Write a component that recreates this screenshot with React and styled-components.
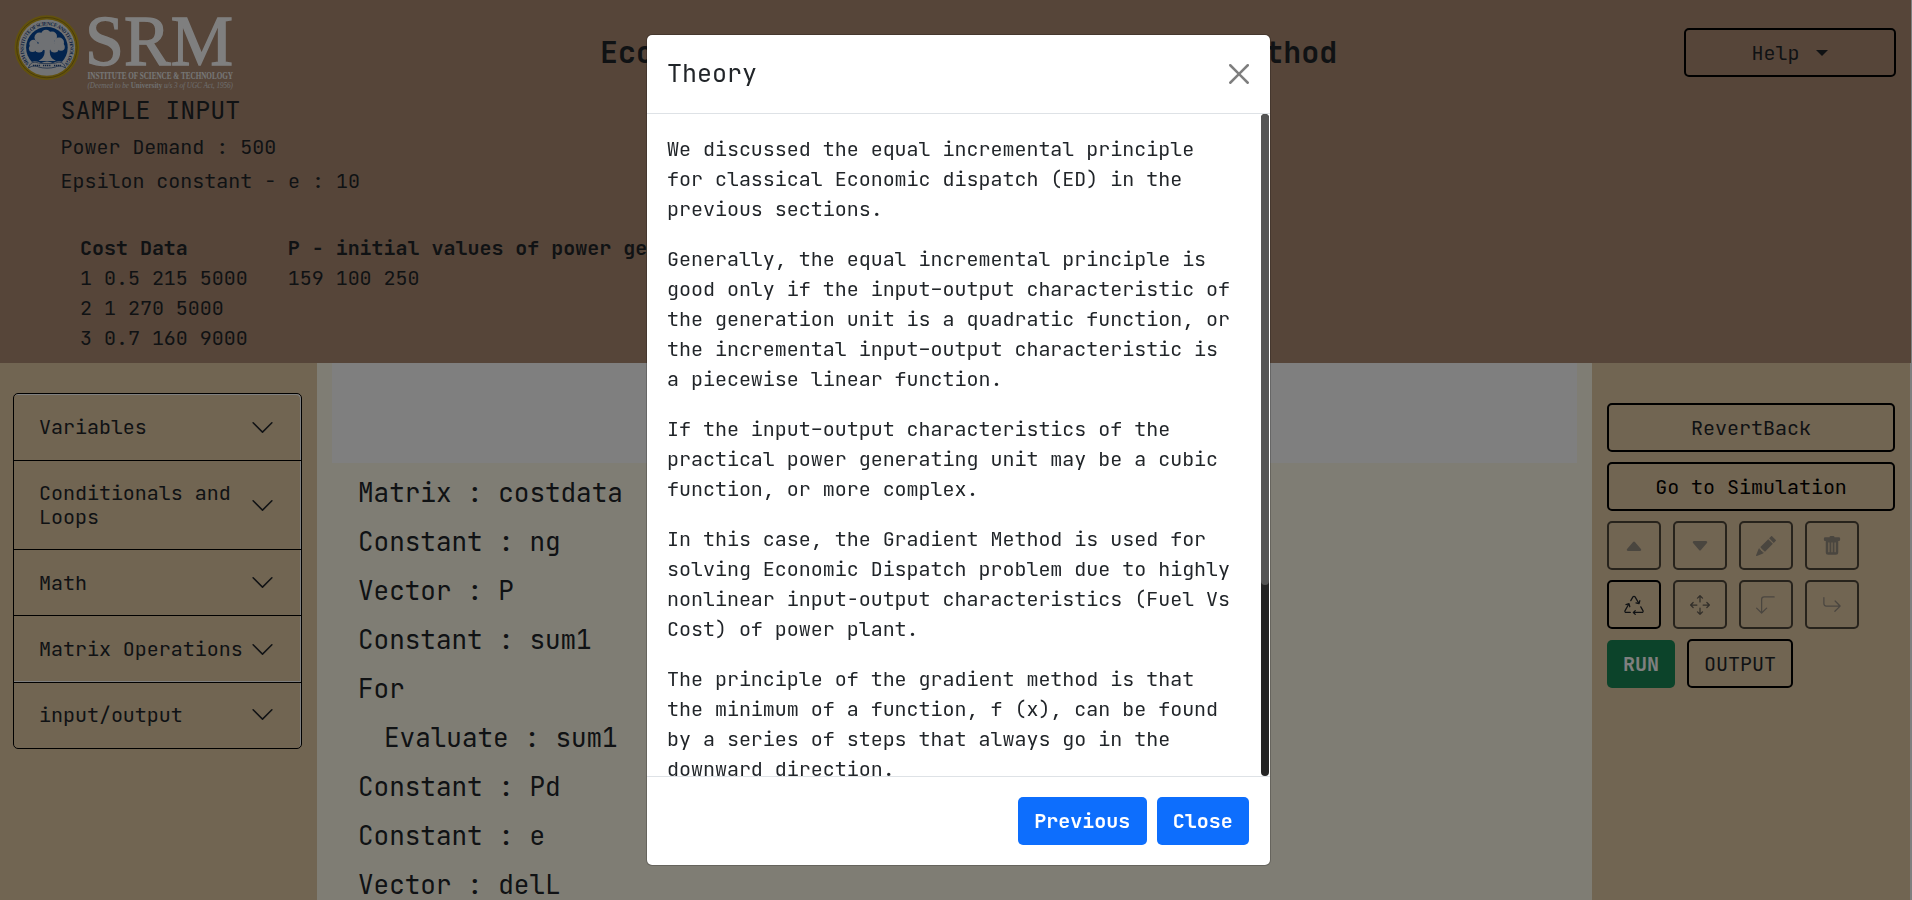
import React from "react";
import styled, { createGlobalStyle, css } from "styled-components";
import {
  BsCaretUpFill,
  BsCaretDownFill,
  BsPencilFill,
  BsTrashFill,
  BsRecycle,
  BsArrowsMove,
  BsArrow90DegDown,
  BsArrowReturnRight,
} from "react-icons/bs";

const GlobalStyle = createGlobalStyle`
  *, *::before, *::after { box-sizing: border-box; }
  body {
    margin: 0;
    background: #fff;
    color: #212529;
    font-family: "JetBrains Mono", "DejaVu Sans Mono", monospace;
    font-size: 20px;
    line-height: 1.5;
    letter-spacing: -0.02px;
    overflow: hidden;
  }
  h1, h2, p { margin: 0; }
`;

const Page = styled.div`
  height: 900px;
  display: flex;
  flex-direction: column;
  overflow: hidden;
`;

const Header = styled.header`
  flex: none;
  height: 363px;
  margin-right: 1px;
  background: #ad8b73;
`;

const TopBar = styled.div`
  display: grid;
  grid-template-columns: 317px 1fr 227px;
  height: 92px;
`;

const Logo = styled.svg`
  display: block;
  margin: 14px 0 0 14px;
  overflow: visible;
`;

const PageTitle = styled.h1`
  padding: 30px 0 0 283px;
  font-size: 30px;
  line-height: 45px;
  font-weight: 700;
  white-space: nowrap;
`;

const outline = css`
  display: flex;
  align-items: center;
  justify-content: center;
  height: 49px;
  padding: 0;
  border: 2px solid #000;
  border-radius: 5px;
  background: transparent;
  color: ${(p) => p.$color || "#212529"};
  font: inherit;
  letter-spacing: inherit;
`;

const HelpButton = styled.button`
  ${outline}
  width: 212px;
  margin-top: 28px;
  gap: 17px;
`;

const Caret = styled.span`
  border: 6px solid transparent;
  border-top-color: currentColor;
  border-bottom: 0;
`;

const Sample = styled.section`
  padding-left: 60.5px;
`;

const SampleTitle = styled.h2`
  font-size: 25px;
  font-weight: 400;
  line-height: 36px;
  margin-bottom: 1.5px;
`;

const SampleLine = styled.p`
  line-height: 34px;
`;

const SampleTable = styled.div`
  display: flex;
  gap: 40px;
  padding: 35.5px 0 0 19.5px;
`;

const SampleColumn = styled.div`
  white-space: nowrap;
`;

const Main = styled.div`
  flex: 1;
  min-height: 0;
  display: grid;
  grid-template-columns: 317px 1275px 318px;
`;

const Sidebar = styled.aside`
  background: #e3caa5;
  padding: 30px 15px 0 13px;
`;

const Accordion = styled.div`
  border: 1px solid #000;
  border-radius: 5px;
  box-shadow: inset -1px 1px 0 #fff;
`;

const AccordionItem = styled.button`
  display: flex;
  align-items: center;
  justify-content: space-between;
  width: 100%;
  height: ${(p) => p.$height}px;
  padding: 0 26px ${(p) => (p.$last ? 2 : 0)}px 25px;
  border: 0;
  border-bottom: ${(p) => (p.$last ? "0" : "1px solid #000")};
  box-shadow: ${(p) => (p.$edge ? "inset 0 -1px 0 #fff" : "none")};
  background: transparent;
  color: inherit;
  font: inherit;
  letter-spacing: inherit;
  line-height: 24px;
  text-align: left;
  span { flex: 1; margin-right: -4px; }
  svg { flex: none; }
`;

const Workspace = styled.main`
  background: #fffbe9;
  padding: 0 15px;
`;

const Canvas = styled.div`
  height: 100px;
  background: #fff;
`;

const CodeList = styled.div`
  padding: 5px 0 0 26px;
`;

const CodeLine = styled.p`
  padding-left: ${(p) => (p.$indent ? 26 : 0)}px;
  font-size: 26px;
  line-height: 49px;
`;

const Tools = styled.aside`
  background: #e3caa5;
  padding: 40px 15px 0;
  display: flex;
  flex-direction: column;
  gap: 10px;
`;

const ToolRow = styled.div`
  display: flex;
  gap: 12px;
`;

const WideButton = styled.button`
  ${outline}
`;

const IconButton = styled.button`
  ${outline}
  width: 54px;
  opacity: ${(p) => (p.disabled ? 0.65 : 1)};
  svg { width: 20px; height: 20px; }
`;

const RunButton = styled.button`
  width: 68px;
  height: 48px;
  margin-top: 1px;
  padding: 0;
  border: 0;
  border-radius: 5px;
  background: #198754;
  color: #fff;
  font: inherit;
  font-weight: 700;
  letter-spacing: inherit;
`;

const OutputButton = styled.button`
  ${outline}
  width: 106px;
`;

const Backdrop = styled.div`
  position: fixed;
  inset: 0;
  background: rgba(0, 0, 0, 0.5);
`;

const Modal = styled.div`
  position: fixed;
  top: 34px;
  left: 646px;
  width: 625px;
  height: 832px;
  display: flex;
  flex-direction: column;
  border: 1px solid rgba(0, 0, 0, 0.2);
  border-radius: 6px;
  background: #fff;
  background-clip: padding-box;
`;

const ModalHeader = styled.div`
  flex: none;
  display: flex;
  align-items: center;
  justify-content: space-between;
  height: 79px;
  padding: 0 21px 0 20px;
  border-bottom: 1px solid #dee2e6;
  h2 { font-size: 25px; font-weight: 400; margin-top: -1px; }
  svg { opacity: 0.5; }
`;

const ModalBody = styled.div`
  flex: 1;
  min-height: 0;
  display: flex;
  padding-right: 1px;
`;

const ModalText = styled.div`
  flex: 1;
  min-width: 0;
  overflow: hidden;
  padding: 20px 20px 0;
  p { margin-bottom: 20px; white-space: pre; }
`;

const ScrollTrack = styled.div`
  width: 8px;
  border-radius: 5px;
  background: #242424;
`;

const ScrollThumb = styled.div`
  height: 471px;
  border-radius: 5px;
  background: #555;
`;

const ModalFooter = styled.div`
  flex: none;
  display: flex;
  align-items: center;
  justify-content: flex-end;
  gap: 10px;
  height: 89px;
  padding-right: 21px;
  border-top: 1px solid #dee2e6;
`;

const PrimaryButton = styled.button`
  height: 48px;
  padding: 0 16.3px;
  border: 0;
  border-radius: 5px;
  background: #0d6efd;
  color: #fff;
  font: inherit;
  font-weight: 700;
  letter-spacing: inherit;
`;

const SECTIONS = [
  { label: "Variables", height: 67 },
  { label: "Conditionals and Loops", height: 89 },
  { label: "Math", height: 66 },
  { label: "Matrix Operations", height: 67, edge: true },
  { label: "input/output", height: 65, last: true },
];

const CODE = [
  { text: "Matrix : costdata" },
  { text: "Constant : ng" },
  { text: "Vector : P" },
  { text: "Constant : sum1" },
  { text: "For" },
  { text: "Evaluate : sum1", indent: true },
  { text: "Constant : Pd" },
  { text: "Constant : e" },
  { text: "Vector : delL" },
];

const THEORY = [
  "We discussed the equal incremental principle\nfor classical Economic dispatch (ED) in the\nprevious sections.",
  "Generally, the equal incremental principle is\ngood only if the input–output characteristic of\nthe generation unit is a quadratic function, or\nthe incremental input–output characteristic is\na piecewise linear function.",
  "If the input–output characteristics of the\npractical power generating unit may be a cubic\nfunction, or more complex.",
  "In this case, the Gradient Method is used for\nsolving Economic Dispatch problem due to highly\nnonlinear input-output characteristics (Fuel Vs\nCost) of power plant.",
  "The principle of the gradient method is that\nthe minimum of a function, f (x), can be found\nby a series of steps that always go in the\ndownward direction.",
];

const muted = "#6c6c6c";

function Chevron() {
  return (
    <svg width="25" height="25" viewBox="0 0 16 16" fill="#212529">
      <path
        fillRule="evenodd"
        d="M1.646 4.646a.5.5 0 0 1 .708 0L8 10.293l5.646-5.647a.5.5 0 0 1 .708.708l-6 6a.5.5 0 0 1-.708 0l-6-6a.5.5 0 0 1 0-.708z"
      />
    </svg>
  );
}

function CloseIcon() {
  return (
    <svg width="20" height="20" viewBox="0 0 16 16" fill="#000">
      <path d="M.293.293a1 1 0 0 1 1.414 0L8 6.586 14.293.293a1 1 0 1 1 1.414 1.414L9.414 8l6.293 6.293a1 1 0 0 1-1.414 1.414L8 9.414l-6.293 6.293a1 1 0 0 1-1.414-1.414L6.586 8 .293 1.707a1 1 0 0 1 0-1.414z" />
    </svg>
  );
}

function BrandLogo() {
  return (
    <Logo width="222" height="78" viewBox="0 0 222 78" fontFamily="Liberation Serif, serif" letterSpacing="0">
      <defs>
        <path id="sealArc" d="M15.2 49.6A23.2 23.2 0 1 1 50.6 49.6" />
      </defs>
      <circle cx="32.9" cy="33.6" r="32.4" fill="#c4a21a" />
      <circle cx="32.9" cy="33.6" r="30.2" fill="none" stroke="#8f7610" strokeWidth="0.9" />
      <circle cx="32.9" cy="33.6" r="28.2" fill="#e4e6e8" />
      <text fontSize="5.2" fontWeight="700" fill="#1d4683">
        <textPath href="#sealArc" textLength="106">
          SRM INSTITUTE OF SCIENCE AND TECHNOLOGY
        </textPath>
      </text>
      <circle cx="32.9" cy="33.6" r="20.8" fill="#06489c" />
      <g fill="#dfe3e8">
        <circle cx="25.5" cy="23.5" r="5" />
        <circle cx="32" cy="20.5" r="4.8" />
        <circle cx="38" cy="22.5" r="5" />
        <circle cx="19.5" cy="30" r="4.2" />
        <circle cx="45" cy="28.5" r="5" />
        <circle cx="32.5" cy="28.5" r="8" />
        <circle cx="18.5" cy="34.5" r="3.6" />
        <circle cx="25" cy="34" r="4.6" />
        <circle cx="40.5" cy="34" r="4.6" />
        <circle cx="47" cy="33" r="3.8" />
        <path d="M30.5 34h5.5c-.8 7 .5 10 6 13H24.5c5-3 6.800-6 6-13z" />
      </g>
      <path d="M14 50c5-4 9-3 13-1 4-2 8-2 12 0 4-2 8-3 13 1l-2 5H16z" fill="#e4e6e8" />
      <path d="M14.500 54c1-5 5-6.500 8-5.500 4 1.500 17 1.500 21 0 3-1 7 .5 8 5.500-4-2.500-7-2.500-10-1-5 1.500-12 1.500-17 0-3-1.500-6-1.500-10 1z" fill="#e4e6e8" stroke="#1d4683" strokeWidth="0.7" />
      <path d="M19 51.500h7M29 51.500h8M40 51.500h7" stroke="#1d4683" strokeWidth="1.500" strokeDasharray="1.2 .7" />
      <text x="71" y="51.3" fontSize="71" fill="#fff" stroke="#fff" strokeWidth="1.3" textLength="148" lengthAdjust="spacingAndGlyphs">
        SRM
      </text>
      <text x="73.5" y="64.6" fontSize="10" fontWeight="700" fill="#eee" textLength="145.500" lengthAdjust="spacingAndGlyphs">
        INSTITUTE OF SCIENCE &amp; TECHNOLOGY
      </text>
      <text x="73.5" y="73.500" fontSize="8" fontStyle="italic" fill="#ddd" textLength="145.500" lengthAdjust="spacingAndGlyphs">
        (Deemed to be <tspan fontStyle="normal" fontWeight="700">University</tspan> u/s 3 of UGC Act, 1956)
      </text>
    </Logo>
  );
}

export default function App() {
  return (
    <>
      <GlobalStyle />
      <Page>
        <Header>
          <TopBar>
            <BrandLogo />
            <PageTitle>Economic Load Dispatch by Gradient Method</PageTitle>
            <HelpButton>
              Help <Caret />
            </HelpButton>
          </TopBar>
          <Sample>
            <SampleTitle>SAMPLE INPUT</SampleTitle>
            <SampleLine>Power Demand : 500</SampleLine>
            <SampleLine>Epsilon constant - e : 10</SampleLine>
            <SampleTable>
              <SampleColumn>
                <strong>Cost Data</strong>
                <div>1 0.5 215 5000</div>
                <div>2 1 270 5000</div>
                <div>3 0.7 160 9000</div>
              </SampleColumn>
              <SampleColumn>
                <strong>P - initial values of power generation</strong>
                <div>159 100 250</div>
              </SampleColumn>
            </SampleTable>
          </Sample>
        </Header>
        <Main>
          <Sidebar>
            <Accordion>
              {SECTIONS.map((s) => (
                <AccordionItem key={s.label} $height={s.height} $last={s.last} $edge={s.edge}>
                  <span>{s.label}</span>
                  <Chevron />
                </AccordionItem>
              ))}
            </Accordion>
          </Sidebar>
          <Workspace>
            <Canvas />
            <CodeList>
              {CODE.map((line, i) => (
                <CodeLine key={i} $indent={line.indent}>
                  {line.text}
                </CodeLine>
              ))}
            </CodeList>
          </Workspace>
          <Tools>
            <WideButton>RevertBack</WideButton>
            <WideButton $color="#000">Go to Simulation</WideButton>
            <ToolRow>
              <IconButton disabled $color={muted}><BsCaretUpFill /></IconButton>
              <IconButton disabled $color={muted}><BsCaretDownFill /></IconButton>
              <IconButton disabled $color={muted}><BsPencilFill /></IconButton>
              <IconButton disabled $color={muted}><BsTrashFill /></IconButton>
            </ToolRow>
            <ToolRow>
              <IconButton><BsRecycle /></IconButton>
              <IconButton disabled><BsArrowsMove /></IconButton>
              <IconButton disabled $color={muted}><BsArrow90DegDown /></IconButton>
              <IconButton disabled $color={muted}><BsArrowReturnRight /></IconButton>
            </ToolRow>
            <ToolRow>
              <RunButton>RUN</RunButton>
              <OutputButton>OUTPUT</OutputButton>
            </ToolRow>
          </Tools>
        </Main>
      </Page>
      <Backdrop />
      <Modal>
        <ModalHeader>
          <h2>Theory</h2>
          <CloseIcon />
        </ModalHeader>
        <ModalBody>
          <ModalText>
            {THEORY.map((text) => (
              <p key={text}>{text}</p>
            ))}
          </ModalText>
          <ScrollTrack>
            <ScrollThumb />
          </ScrollTrack>
        </ModalBody>
        <ModalFooter>
          <PrimaryButton>Previous</PrimaryButton>
          <PrimaryButton>Close</PrimaryButton>
        </ModalFooter>
      </Modal>
    </>
  );
}
